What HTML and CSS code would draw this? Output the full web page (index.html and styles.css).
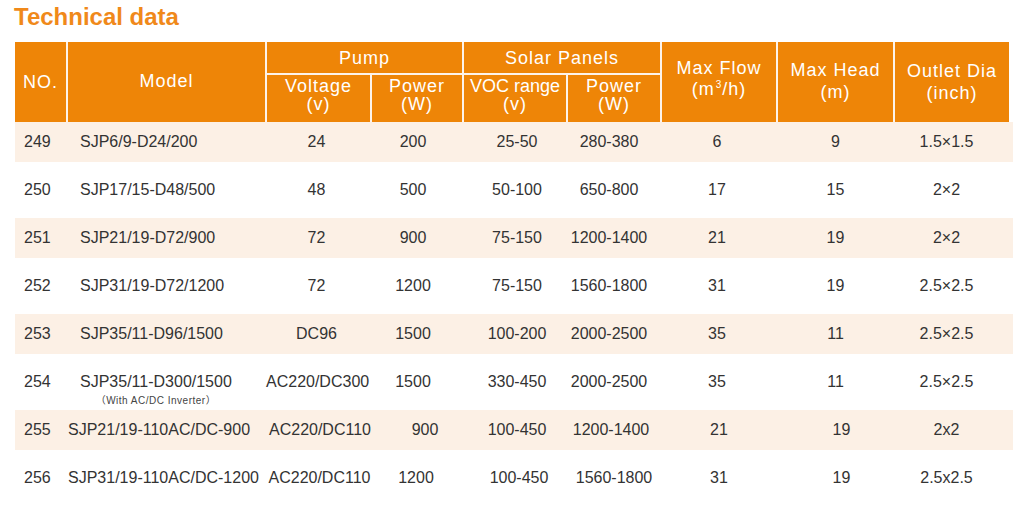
FILE: index.html
```html
<!DOCTYPE html>
<html>
<head>
<meta charset="utf-8">
<link rel="stylesheet" href="styles.css">
</head>
<body>
<div class="page">
  <h1 class="title">Technical data</h1>
  <div class="head">
    <div class="h h-no">NO.</div>
    <div class="h h-model">Model</div>
    <div class="h h-pump">Pump</div>
    <div class="h h-solar">Solar Panels</div>
    <div class="h h-flow"><span>Max Flow</span><span>(m<sup>3</sup>/h)</span></div>
    <div class="h h-headm"><span>Max Head</span><span>(m)</span></div>
    <div class="h h-outlet"><span>Outlet Dia</span><span>(inch)</span></div>
    <div class="h sub h-volt"><span>Voltage</span><span>(v)</span></div>
    <div class="h sub h-ppow"><span>Power</span><span>(W)</span></div>
    <div class="h sub h-voc"><span class="tight">VOC range</span><span>(v)</span></div>
    <div class="h sub h-spow"><span>Power</span><span>(W)</span></div>
  </div>
  <div class="body">
    <div class="row alt">
      <div class="c no">249</div><div class="c model">SJP6/9-D24/200</div><div class="c volt">24</div><div class="c ppow">200</div><div class="c voc">25-50</div><div class="c spow">280-380</div><div class="c flow">6</div><div class="c headm">9</div><div class="c outlet">1.5×1.5</div>
    </div>
    <div class="row">
      <div class="c no">250</div><div class="c model">SJP17/15-D48/500</div><div class="c volt">48</div><div class="c ppow">500</div><div class="c voc">50-100</div><div class="c spow">650-800</div><div class="c flow">17</div><div class="c headm">15</div><div class="c outlet">2×2</div>
    </div>
    <div class="row alt">
      <div class="c no">251</div><div class="c model">SJP21/19-D72/900</div><div class="c volt">72</div><div class="c ppow">900</div><div class="c voc">75-150</div><div class="c spow">1200-1400</div><div class="c flow">21</div><div class="c headm">19</div><div class="c outlet">2×2</div>
    </div>
    <div class="row">
      <div class="c no">252</div><div class="c model">SJP31/19-D72/1200</div><div class="c volt">72</div><div class="c ppow">1200</div><div class="c voc">75-150</div><div class="c spow">1560-1800</div><div class="c flow">31</div><div class="c headm">19</div><div class="c outlet">2.5×2.5</div>
    </div>
    <div class="row alt">
      <div class="c no">253</div><div class="c model">SJP35/11-D96/1500</div><div class="c volt">DC96</div><div class="c ppow">1500</div><div class="c voc">100-200</div><div class="c spow">2000-2500</div><div class="c flow">35</div><div class="c headm">11</div><div class="c outlet">2.5×2.5</div>
    </div>
    <div class="row">
      <div class="c no">254</div><div class="c model"><div class="stack"><span>SJP35/11-D300/1500</span><span class="note">（With AC/DC Inverter）</span></div></div><div class="c volt">AC220/DC300</div><div class="c ppow">1500</div><div class="c voc">330-450</div><div class="c spow">2000-2500</div><div class="c flow">35</div><div class="c headm">11</div><div class="c outlet">2.5×2.5</div>
    </div>
    <div class="row alt r255">
      <div class="c no">255</div><div class="c model">SJP21/19-110AC/DC-900</div><div class="c volt">AC220/DC110</div><div class="c ppow">900</div><div class="c voc">100-450</div><div class="c spow">1200-1400</div><div class="c flow">21</div><div class="c headm">19</div><div class="c outlet">2x2</div>
    </div>
    <div class="row r256">
      <div class="c no">256</div><div class="c model">SJP31/19-110AC/DC-1200</div><div class="c volt">AC220/DC110</div><div class="c ppow">1200</div><div class="c voc">100-450</div><div class="c spow">1560-1800</div><div class="c flow">31</div><div class="c headm">19</div><div class="c outlet">2.5x2.5</div>
    </div>
  </div>
</div>
</body>
</html>
```

FILE: styles.css
```css
* { box-sizing: border-box; }
html, body { margin: 0; padding: 0; background: #ffffff; }
body { font-family: "Liberation Sans", Arial, sans-serif; }

.page {
  width: 1024px;
  height: 513px;
  padding: 3px 0 0 15px;
  overflow: hidden;
}

.title {
  margin: 0 0 0 -1px;
  font-size: 24px;
  line-height: 28px;
  font-weight: 700;
  color: #f0891a;
}

.head {
  margin-top: 11px;
  width: 994px;
  display: grid;
  grid-template-columns: 51px 197px 103px 90px 102px 92px 114px 115px 114px;
  grid-template-rows: 31px 47px;
  gap: 2px;
  background: #fdf3ea;
}

.h {
  background: #ee8507;
  color: #ffffff;
  font-size: 18px;
  letter-spacing: 1px;
  display: flex;
  flex-direction: column;
  align-items: center;
  justify-content: center;
  text-align: center;
  white-space: nowrap;
  line-height: 22px;
}
.h-no { grid-column: 1; grid-row: 1 / span 2; padding-bottom: 1px; }
.h-model { grid-column: 2; grid-row: 1 / span 2; padding-bottom: 2px; }
.h-pump { grid-column: 3 / span 2; grid-row: 1; }
.h-solar { grid-column: 5 / span 2; grid-row: 1; }
.h-flow { grid-column: 7; grid-row: 1 / span 2; padding-bottom: 6px; line-height: 21px; }
.h-headm { grid-column: 8; grid-row: 1 / span 2; padding-bottom: 2px; }
.h-outlet { grid-column: 9; grid-row: 1 / span 2; }
.h-volt { grid-column: 3; grid-row: 2; }
.h-ppow { grid-column: 4; grid-row: 2; }
.h-voc { grid-column: 5; grid-row: 2; }
.h-spow { grid-column: 6; grid-row: 2; }
.h.sub { line-height: 18px; padding-bottom: 8px; }
.h .tight { letter-spacing: 0; }
.h sup { font-size: 10px; line-height: 0; vertical-align: 7px; letter-spacing: 0; margin: 0 1px; }

.body { width: 998px; }

.row {
  display: grid;
  grid-template-columns: 52px 199px 105px 92px 104px 94px 116px 117px 105px 14px;
  height: 56px;
  align-items: center;
  font-size: 16px;
  color: #333333;
}
.row.alt { height: 40px; background: #fcf0e5; }

.c { text-align: center; white-space: nowrap; }
.c.no { text-align: left; padding-left: 9px; }
.c.model { text-align: left; padding-left: 13px; }
.c.volt { padding-right: 4px; }
.c.ppow { padding-right: 8px; }
.c.voc { padding-left: 4px; }
.c.spow { padding-right: 10px; }
.c.flow { padding-right: 4px; }

.stack {
  display: inline-flex;
  flex-direction: column;
  align-items: center;
  line-height: 18px;
}
.note {
  font-size: 10px;
  letter-spacing: 0.5px;
  line-height: 12px;
  margin-top: 4px;
  margin-bottom: -16px;
  color: #444444;
  font-family: "Liberation Sans", "Noto Sans CJK SC", sans-serif;
}

.r255 .c.model, .r256 .c.model { padding-left: 1px; }
.r255 .c.volt { padding-right: 0; padding-left: 3px; }
.r255 .c.ppow { padding-right: 0; padding-left: 16px; }
.r255 .c.spow { padding-right: 6px; }
.r255 .c.flow, .r256 .c.flow { padding-right: 0; }
.r255 .c.headm, .r256 .c.headm { padding-left: 12px; }
.r256 .c.volt { padding-right: 0; padding-left: 2px; }
.r256 .c.ppow { padding-right: 2px; }
.r256 .c.voc { padding-left: 8px; }
.r256 .c.spow { padding-right: 0; }
```
